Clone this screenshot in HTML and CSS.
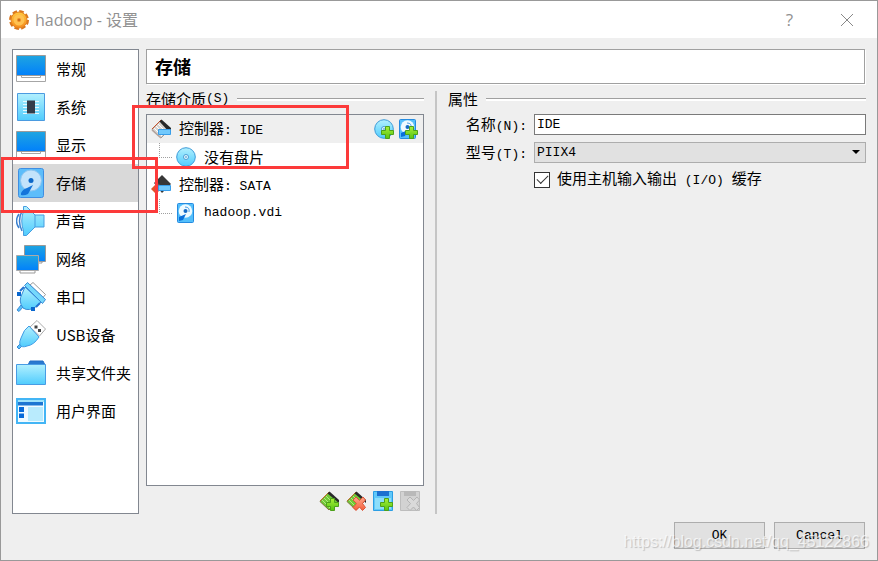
FILE: index.html
```html
<!DOCTYPE html>
<html lang="zh-CN">
<head>
<meta charset="utf-8">
<title>hadoop - 设置</title>
<link rel="stylesheet" href="styles.css">
</head>
<body>
<svg class="defs" aria-hidden="true">
  <defs>
    <linearGradient id="screen" x1="0" y1="0" x2="0" y2="1"><stop offset="0" stop-color="#1fa5e0"/><stop offset="1" stop-color="#0180fb"/></linearGradient>
    <linearGradient id="sky" x1="0" y1="0" x2="0" y2="1"><stop offset="0" stop-color="#b2f0fe"/><stop offset="1" stop-color="#50ccfd"/></linearGradient>
    <linearGradient id="lime" x1="0" y1="0" x2="0" y2="1"><stop offset="0" stop-color="#a8ef37"/><stop offset="1" stop-color="#55c514"/></linearGradient>
    <linearGradient id="orange" x1="0" y1="0" x2="0" y2="1"><stop offset="0" stop-color="#ffc83f"/><stop offset="1" stop-color="#f58a1c"/></linearGradient>
    <linearGradient id="coral" x1="0" y1="0" x2="0" y2="1"><stop offset="0" stop-color="#ffa58a"/><stop offset="1" stop-color="#f5603c"/></linearGradient>
    <symbol id="monitor" viewBox="0 0 30 28">
      <path d="M.5 20.500h29v6H.5z" fill="#fff" stroke="#a6a6a6"/><path d="M5.500 20v2.500h19V20" fill="#fff" stroke="#a6a6a6"/>
      <path d="M.5.5h29v20H.5z" fill="url(#screen)" stroke="#9b9b9b"/>
    </symbol>
    <symbol id="chip" viewBox="0 0 30 30">
      <path d="M1.500 1.500h27v27h-27z" fill="url(#sky)" stroke="#4b9be0"/>
      <path d="M7 9.500h16M7 12.500h16M7 15.500h16M7 18.500h16M7 21.500h16" stroke="#e8faff"/><path d="M11 8.500h8v13h-8z" fill="#343d4b"/>
    </symbol>
    <symbol id="disk" viewBox="0 0 30 30">
      <rect x="2.500" y=".5" width="25" height="29" rx="2" fill="#5dbdfa" stroke="#3f8ee2"/>
      <circle cx="15" cy="12.500" r="10.500" fill="#c3e3fb" stroke="#8ec5f0"/>
      <circle cx="15" cy="12.500" r="2.500" fill="#0c67c8"/>
      <path d="M17 17 12 26q-4 2-7 1v-2q2-4 6-5z" fill="#1374da"/>
    </symbol>
    <symbol id="speaker" viewBox="0 0 30 30">
      <path d="M6 5q-5 10 0 20M3 8q-5 7 0 14" fill="none" stroke="#3b80cf" stroke-width="1.500"/>
      <path d="M7.500.5h3L19 9h9v12h-9l-8.500 8.500h-3V25Q4 15 7.500 5z" fill="url(#sky)" stroke="#479de0"/><path d="M19 9v12" stroke="#479de0"/>
    </symbol>
    <symbol id="network" viewBox="0 0 30 30">
      <path d="M11 17v2h15v-2" fill="#fff" stroke="#999"/><path d="M8.500 1.500h21v16h-21z" fill="url(#screen)" stroke="#999"/>
      <path d="M4 26v3h15v-3" fill="#fff" stroke="#999"/><path d="M.5 11.500h22v15H.5z" fill="url(#screen)" stroke="#aaa"/>
    </symbol>
    <symbol id="serial" viewBox="0 0 30 30">
      <path d="m14 3 3-2.500 12.500 12-2.500 3z" fill="#fff" stroke="#999"/>
      <path d="m1 28 4-5 2 2-4 4.500z" fill="#59bff9" stroke="#398bd6"/>
      <path d="m9 5 16 15-4 4q-8 6-14 2-5-7-1-14z" fill="url(#sky)" stroke="#398bd6"/>
      <path d="m8.500 3.500 3-3 18 17-3 4z" fill="#75d8fc" stroke="#398bd6"/>
      <path d="M1 10h4v4H1zM15 25h4v4h-4z" fill="#0967cf"/><path d="m4 9 4-4m12 20 4-4" stroke="#2374d1" stroke-width="2"/>
    </symbol>
    <symbol id="usb" viewBox="0 0 30 30">
      <path d="m14 7 7-6.500 8.500 8.500-6 7z" fill="#fff" stroke="#aaa"/><path d="M18.500 5.500h3v3h-3zM22 9h3v3h-3z" fill="#454545"/>
      <path d="m1 27 3-3 2 2-3 3z" fill="#59bff9" stroke="#398bd6"/>
      <path d="m13 6 10 11q-5 8-12 9-5 2-7-1-1-3 1-7 3-9 8-12z" fill="url(#sky)" stroke="#409ce5"/>
    </symbol>
    <symbol id="folder" viewBox="0 0 30 26">
      <path d="M12 5l2-4h13l2 4z" fill="#2879d0" stroke="#236fc5"/><path d="M.5 4.500h29v20H.5z" fill="url(#sky)" stroke="#489ce4"/>
    </symbol>
    <symbol id="panel" viewBox="0 0 30 26">
      <path d="M1 1h28v24H1z" fill="#f1fbff" stroke="#43b5f5" stroke-width="2"/><path d="M2 2h26v2H2z" fill="#9ee3fb"/>
      <path d="M2 4h25v3.500H2z" fill="#1e76d2"/><path d="M3 9h5v5H3zM3 15.500h5v4.500H3z" fill="#086bd9"/><path d="M12 9h15v14H12z" fill="#b9ebfd"/>
    </symbol>
    <symbol id="plus" viewBox="0 0 20 20"><path d="M11.500 7.500h4v4h4v4h-4v4h-4v-4h-4v-4h4z" fill="url(#lime)" stroke="#4da11b"/></symbol>
    <symbol id="cross" viewBox="0 0 20 20"><path d="m7 9 3-3 3.500 3.500L17 6l2.500 3-3 3.500 3 4-3 3-3-3.500-3.500 3.500-3-3 3.500-4z" fill="url(#coral)" stroke="#db5438"/></symbol>
    <symbol id="ide" viewBox="0 0 20 20">
      <path d="M1 10.500 10 1l9 9-9 9z" fill="#d9d4d0" stroke="#999"/><path d="m1 10 9-9" stroke="#c6532c"/><path d="m3 9 8 8m-6-10 8 8M7 5l8 8" stroke="#fff"/>
      <path d="m8.500 2.500 2-2L20 9v4h-2z" fill="#282828"/><path d="m1 11 9 8" stroke="#b5a59f" stroke-width="1.500"/><path d="M7.500 10.500h12v5h-12z" fill="#72c9fc" stroke="#389ee9"/>
    </symbol>
    <symbol id="sata" viewBox="0 0 20 20">
      <path d="M3 8 11 0l9 9-9 9z" fill="#373737"/><path d="m5 7 10 9" stroke="#666"/><path d="m0 14 4-4 5 5-4 4z" fill="#e15329"/><path d="M7.500 10.500h12v5h-12z" fill="#72c9fc" stroke="#389ee9"/>
    </symbol>
    <symbol id="disc" viewBox="0 0 20 20"><circle cx="10" cy="10" r="9.300" fill="url(#sky)" stroke="#3d9bd9"/><circle cx="10" cy="10" r="2.500" fill="#e6f8ff" stroke="#4a9dd4"/><circle cx="10" cy="10" r=".8" fill="#1c83c5"/></symbol>
    <symbol id="vdi" viewBox="0 0 20 20">
      <rect x="1.500" y=".5" width="16" height="19" rx="1" fill="#53bffb" stroke="#258be0"/><circle cx="9.500" cy="8" r="6.800" fill="#eefaff"/>
      <circle cx="9.500" cy="8" r="2" fill="#146ac6"/><path d="M9 4q5 0 4 5" fill="none" stroke="#4aa0e6"/><path d="m10 11-3 6-4 1v-4z" fill="#086fda"/>
    </symbol>
    <symbol id="card" viewBox="0 0 20 20">
      <path d="M1 10.500 10 1l9 9-9 9z" fill="#70c936" stroke="#7d7337"/><path d="m3 9 8 8m-6-10 8 8M7 5l8 8" stroke="#b2e97e"/><path d="m1 10 9-9" stroke="#bd6f29"/><path d="m8.500 2.500 2-2L20 9v3z" fill="#292929"/>
    </symbol>
    <symbol id="floppy" viewBox="0 0 20 20"><path d="M.5.5h19v19H.5z" fill="#60c8f9" stroke="#2b9ee4"/><path d="M4 0h12v5H4z" fill="#1c70d0"/><path d="M2 7h16v11H2z" fill="#8cdefb"/></symbol>
    <symbol id="floppy-off" viewBox="0 0 20 20"><path d="M.5.5h19v19H.5z" fill="#d2d2d2" stroke="#bdbdbd"/><path d="M4 0h12v5H4z" fill="#b9b9b9"/><path d="m7 9 3-3 3.500 3.500L17 6l2.500 3-3 3.500 3 4-3 3-3-3.500-3.500 3.500-3-3 3.500-4z" fill="#dadada" stroke="#b4b4b4"/></symbol>
  </defs>
</svg>

<div class="window">
  <header class="titlebar">
    <svg class="i20" viewBox="0 0 20 20"><circle cx="10" cy="10" r="8" fill="none" stroke="#d9761c" stroke-width="4" stroke-dasharray="4.190 2.090"/><circle cx="10" cy="10" r="8" fill="url(#orange)" stroke="#e58420"/><circle cx="10" cy="10" r="5.500" fill="#ffc251"/><circle cx="10" cy="10" r="2" fill="#ee8c24"/><circle cx="10" cy="10" r=".8" fill="#9e4b15"/></svg>
    <h1>hadoop - 设置</h1>
    <button class="caption" aria-label="帮助">?</button>
    <button class="caption" aria-label="关闭"><svg width="14" height="14" viewBox="0 0 14 14"><path d="m1 1 12 12M13 1 1 13" stroke="#888" fill="none"/></svg></button>
  </header>

  <div class="body">
    <main>
      <nav>
        <a href="#general"><svg><use href="#monitor"/></svg>常规</a>
        <a href="#system"><svg><use href="#chip"/></svg>系统</a>
        <a href="#display"><svg><use href="#monitor"/></svg>显示</a>
        <a href="#storage" class="selected" aria-current="page"><svg><use href="#disk"/></svg>存储</a>
        <a href="#audio"><svg><use href="#speaker"/></svg>声音</a>
        <a href="#network-page"><svg><use href="#network"/></svg>网络</a>
        <a href="#ports"><svg><use href="#serial"/></svg>串口</a>
        <a href="#usb-page"><svg><use href="#usb"/></svg>USB设备</a>
        <a href="#shared"><svg><use href="#folder"/></svg>共享文件夹</a>
        <a href="#ui"><svg><use href="#panel"/></svg>用户界面</a>
      </nav>

      <section class="page">
        <h2 class="heading">存储</h2>
        <div class="columns">
          <section class="media">
            <h3>存储介质<span class="en">(S)</span></h3>
            <div class="tree">
              <div class="row current">
                <svg class="i20"><use href="#ide"/></svg><span class="name">控制器<span class="en">: IDE</span></span>
                <button class="tool" aria-label="添加虚拟光驱"><svg class="i20"><use href="#disc"/><use href="#plus"/></svg></button>
                <button class="tool" aria-label="添加虚拟硬盘"><svg class="i20"><use href="#vdi"/><use href="#plus"/></svg></button>
              </div>
              <div class="row child"><svg class="i20"><use href="#disc"/></svg><span class="name">没有盘片</span></div>
              <div class="row"><svg class="i20"><use href="#sata"/></svg><span class="name">控制器<span class="en">: SATA</span></span></div>
              <div class="row child"><svg class="i20"><use href="#vdi"/></svg><span class="name en">hadoop.vdi</span></div>
            </div>
            <div class="toolbar">
              <button class="tool" aria-label="添加控制器"><svg class="i20"><use href="#card"/><use href="#plus"/></svg></button>
              <button class="tool" aria-label="移除控制器"><svg class="i20"><use href="#card"/><use href="#cross"/></svg></button>
              <button class="tool" aria-label="添加介质"><svg class="i20"><use href="#floppy"/><use href="#plus"/></svg></button>
              <button class="tool" disabled aria-label="移除介质"><svg class="i20"><use href="#floppy-off"/></svg></button>
            </div>
          </section>
          <div class="divider"></div>
          <section>
            <h3>属性</h3>
            <form id="props" class="props">
              <label for="name">名称<span class="en">(N):</span></label>
              <input id="name" type="text" value="IDE">
              <label for="type">型号<span class="en">(T):</span></label>
              <div class="select"><select id="type"><option>PIIX4</option></select></div>
              <label class="check"><input type="checkbox" checked><span>使用主机输入输出<span class="en"> (I/O) </span>缓存</span></label>
            </form>
          </section>
        </div>
      </section>
    </main>
    <footer>
      <button class="push">OK</button>
      <button class="push">Cancel</button>
    </footer>
  </div>
  <div class="mark mark-tree"></div>
  <div class="mark mark-nav"></div>
  <div class="watermark">https://blog.csdn.net/qq_45122866</div>
</div>
</body>
</html>
```
FILE: styles.css
```css
* { box-sizing: border-box; }
body {
  margin: 0;
  background: #efefef;
  color: #000;
  font: 15px/20px "Noto Sans CJK SC", sans-serif;
}
h1, h2, h3 { margin: 0; font-weight: 400; }
button { padding: 0; border: 0; background: none; font: inherit; color: inherit; }
svg { display: block; flex: none; }
.defs { position: absolute; width: 0; height: 0; }
.i20 { width: 20px; height: 20px; }
.en, .push, .props input, .props select { font-family: "Liberation Mono", monospace; font-size: 13px; }
.en { white-space: pre; }

.window {
  position: relative;
  display: flex;
  flex-direction: column;
  min-height: 100vh;
  border: 1px solid #999;
}
.titlebar {
  display: flex;
  align-items: center;
  height: 37px;
  padding: 0 2px 0 8px;
  background: #fff;
  color: #919191;
}
.titlebar h1 {
  flex: 1;
  margin-left: 6px;
  font: 16px/20px "Open Sans", "Noto Sans CJK SC", sans-serif;
}
.caption { display: grid; place-items: center; width: 57px; height: 36px; font: 17px "Open Sans", sans-serif; }

.body { flex: 1; display: flex; flex-direction: column; padding: 11px; }
main { flex: 1; display: flex; gap: 7px; }
nav { flex: none; width: 127px; border: 1px solid #828790; background: #fff; }
nav a {
  display: flex;
  align-items: center;
  gap: 10px;
  height: 38px;
  padding-left: 3px;
  color: #000;
  text-decoration: none;
}
nav svg { width: 30px; height: 30px; }
nav .selected { background: #d9d9d9; }

.page { flex: 1; display: flex; flex-direction: column; gap: 7px; }
.heading {
  height: 35px;
  margin-right: 1px;
  padding-left: 8px;
  border: 1px solid #a0a0a0;
  box-shadow: 1px 1px #fff;
  background: #fff;
  font-size: 18px;
  line-height: 33px;
  font-weight: 700;
}
.columns { flex: 1; display: grid; grid-template-columns: 278px 2px 1fr; gap: 11px; }
.divider { background: #c5c5c5; }
h3 { display: flex; align-items: center; height: 16px; margin-bottom: 7px; font-size: 15px; }
h3::after { content: ""; flex: 1; height: 2px; margin-left: 8px; border-top: 1px solid #a0a0a0; background: #fff; }

.media { display: flex; flex-direction: column; }
.tree { flex: 1; border: 1px solid #828790; background: #fff; }
.row { display: flex; align-items: center; height: 28px; padding: 0 5px 0 4px; }
.row.current { background: #efefef; }
.row .name { flex: 1; margin-left: 8px; }
.row .tool + .tool { margin-left: 4px; }
.child::before {
  content: "";
  width: 12px;
  height: 14px;
  margin: 0 4px 14px 8px;
  border: 1px dotted #a0a0a0;
  border-width: 0 0 1px 1px;
}
.toolbar { display: flex; justify-content: flex-end; gap: 7px; padding: 5px 4px 3px 0; }

.props { display: grid; grid-template-columns: 79px 1fr; gap: 7px; }
.props > label { height: 21px; text-align: right; }
.props input[type="text"], .props select {
  width: 100%;
  height: 21px;
  padding: 0 2px;
  border: 1px solid #7a7a7a;
  border-radius: 0;
  background: #fff;
  color: #000;
}
.select { position: relative; height: 21px; display: flex; }
.props select { appearance: none; border-color: #adadad; background: #e1e1e1; }
.select::after {
  content: "";
  position: absolute;
  right: 6px;
  top: 8px;
  border: 4px solid transparent;
  border-top-color: #000;
  border-bottom: 0;
}
.props .check { grid-column: 2; height: 19px; display: flex; align-items: center; gap: 7px; text-align: left; white-space: nowrap; }
.check input {
  appearance: none;
  display: grid;
  place-items: center;
  width: 16px;
  height: 16px;
  margin: 0;
  border: 1px solid #333;
  background: #fff;
}
.check input:checked::after {
  content: "";
  width: 10px;
  height: 5px;
  margin-bottom: 4px;
  border: solid #333;
  border-width: 0 0 1px 1px;
  transform: rotate(-45deg);
}

footer { display: flex; justify-content: flex-end; gap: 9px; padding: 8px 1px 0 0; }
.push { width: 91px; height: 27px; border: 1px solid #adadad; background: #e1e1e1; }

.mark { position: absolute; border: 3px solid #fc3a3a; pointer-events: none; }
.mark-tree { left: 131px; top: 104px; width: 217px; height: 64px; }
.mark-nav { left: 0; top: 156px; width: 157px; height: 56px; }
.watermark {
  position: absolute;
  right: 8px;
  bottom: 8px;
  color: rgba(255, 255, 255, .7);
  font: 16px/20px "Liberation Sans", sans-serif;
  text-shadow: 1px 1px 1px rgba(0, 0, 0, .2);
  pointer-events: none;
}
```
